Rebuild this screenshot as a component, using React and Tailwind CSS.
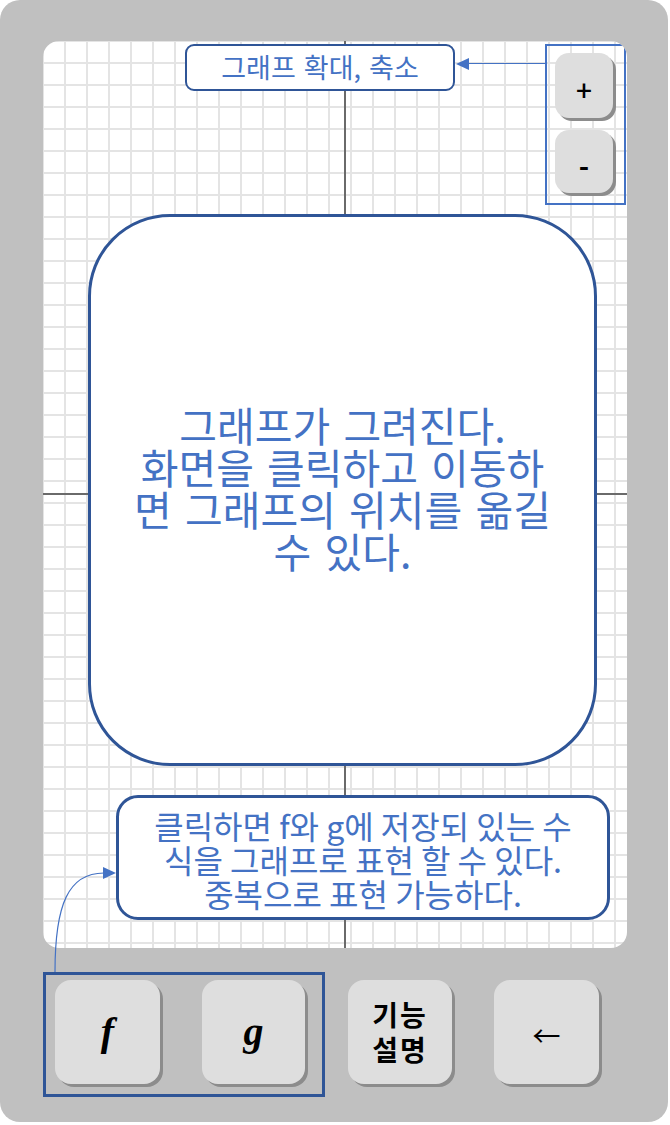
import React from 'react';

const KR = { fontFamily: '"Noto Sans CJK KR", "Noto Sans", sans-serif' };
const SERIF = { fontFamily: '"Liberation Serif", "DejaVu Serif", serif' };

const gridBg =
  'bg-[linear-gradient(to_right,#e4e4e4_2px,transparent_2px),linear-gradient(to_bottom,#e4e4e4_2px,transparent_2px)] bg-[size:22px_22px] bg-[position:-1px_-1px]';

function Key({ className = '', children }) {
  return (
    <div
      className={`flex items-center justify-center bg-[#dedede] shadow-[3px_3px_0_#8c8c8c] ${className}`}
    >
      {children}
    </div>
  );
}

function Arrows() {
  return (
    <svg
      className="absolute left-0 top-0 pointer-events-none"
      width="670"
      height="1125"
      viewBox="0 0 670 1125"
    >
      {/* zoom box -> label */}
      <line x1="545" y1="63.5" x2="466" y2="63.5" stroke="#4472c4" strokeWidth="1.2" />
      <polygon points="456,64 469,58 469,70" fill="#4472c4" />
      {/* f/g box -> callout */}
      <path d="M55 972 C 55 905, 68 873, 104 873" fill="none" stroke="#4472c4" strokeWidth="1.2" />
      <polygon points="116,873 103,867 103,879" fill="#4472c4" />
    </svg>
  );
}

export default function App() {
  return (
    <div className="relative w-[670px] h-[1125px] bg-white" style={KR}>
      <div className="w-[668px] h-[1122px] bg-[#c0c0c0] rounded-[20px] pt-[41px] pl-[43px]">
        {/* graph canvas */}
        <div className={`relative w-[584px] h-[907px] rounded-[16px] bg-white overflow-hidden ${gridBg}`}>
          {/* axes */}
          <div className="absolute left-[301px] top-0 w-[2px] h-full bg-[#6a6a6a]" />
          <div className="absolute top-[452px] left-0 h-[2px] w-full bg-[#6a6a6a]" />

          <div className="relative flex flex-col pt-[3px]">
            {/* top row */}
            <div className="flex items-start">
              <div className="ml-[142px] w-[270px] h-[47px] flex items-center justify-center bg-white border-[2.5px] border-[#2f5597] rounded-[9px] text-[#4472c4] text-[27px] [word-spacing:2px]">
                그래프 확대, 축소
              </div>
              <div className="ml-auto mr-[1px] w-[81px] h-[161px] border-2 border-[#4472c4] pl-[8px] pt-[7px] flex flex-col gap-[12px]">
                <Key className="w-[58px] h-[65px] rounded-[14px] pt-[7px] text-[28px] font-medium text-black">+</Key>
                <Key className="w-[58px] h-[63px] rounded-[14px] pt-[7px] text-[28px] font-bold text-black">-</Key>
              </div>
            </div>

            {/* main note */}
            <div className="mt-[9px] ml-[45px] w-[509px] h-[552px] bg-white border-[3px] border-[#2f5597] rounded-[82px] flex items-center justify-center text-center text-[#4472c4] text-[41px] leading-[42px] [word-spacing:4px] pb-[6px]">
              <p>
                그래프가 그려진다.
                <br />
                화면을 클릭하고 이동하
                <br />
                면 그래프의 위치를 옮길
                <br />수 있다.
              </p>
            </div>

            {/* callout */}
            <div className="mt-[29px] ml-[73px] w-[494px] h-[125px] bg-white border-[3px] border-[#2f5597] rounded-[22px] flex items-center justify-center text-center text-[#4472c4] text-[32px] leading-[34px] pt-[2px]">
              <p>
                클릭하면 f와 g에 저장되 있는 수
                <br />
                식을 그래프로 표현 할 수 있다.
                <br />
                중복으로 표현 가능하다.
              </p>
            </div>
          </div>
        </div>

        {/* keys */}
        <div className="flex items-start mt-[24px]">
          <div className="w-[282px] h-[125px] border-[3px] border-[#2f5597] pt-[5px] pl-[9px] flex items-start gap-[42px]">
            <Key className="w-[105px] h-[104px] rounded-[16px]">
              <span className="text-[40px] font-bold italic text-black" style={SERIF}>
                f
              </span>
            </Key>
            <Key className="w-[103px] h-[104px] rounded-[16px]">
              <span className="text-[40px] font-bold italic text-black" style={SERIF}>
                g
              </span>
            </Key>
          </div>
          <Key className="ml-[23px] mt-[8px] w-[104px] h-[104px] rounded-[16px] flex-col text-[28px] leading-[35px] tracking-[2px] font-bold text-black">
            <span>기능</span>
            <span>설명</span>
          </Key>
          <Key className="ml-[42px] mt-[8px] w-[105px] h-[104px] rounded-[16px] text-[28px] text-black pt-[6px]">
            ←
          </Key>
        </div>
      </div>
      <Arrows />
    </div>
  );
}
